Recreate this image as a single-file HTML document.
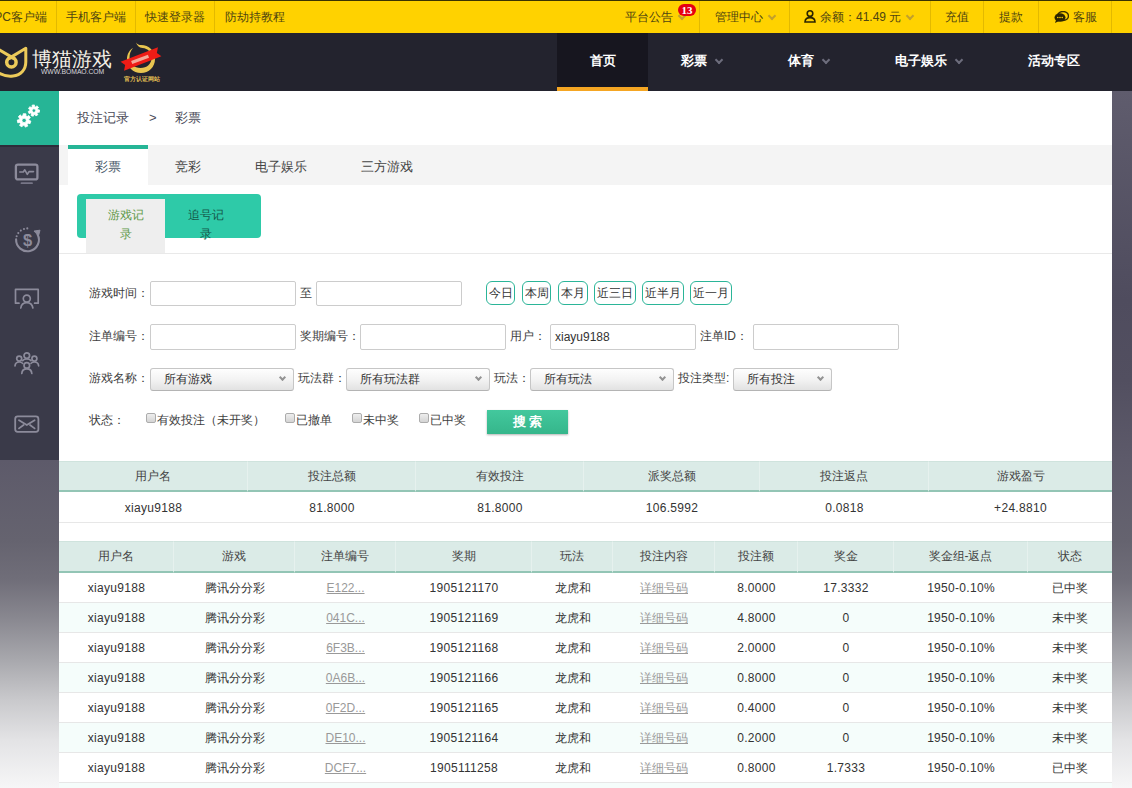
<!DOCTYPE html>
<html lang="zh">
<head>
<meta charset="utf-8">
<title>投注记录</title>
<style>
*{box-sizing:border-box;margin:0;padding:0}
html,body{width:1132px;height:788px;overflow:hidden}
body{font-family:"Liberation Sans",sans-serif;font-size:12px;color:#333;position:relative;
background:linear-gradient(to bottom,#5f5c6d 0px,#5f5c6d 91px,#4f4c5e 300px,#524f60 380px,#5d5a6a 460px,#65636f 540px,#706e79 580px,#8a8991 620px,#a8a8ad 660px,#c9c9cc 700px,#e3e3e5 740px,#f6f6f7 788px);}
a{color:inherit;text-decoration:none}
.abs{position:absolute}
/* top yellow bar */
#topbar{position:absolute;left:0;top:0;width:1132px;height:33px;background:#ffd200;border-top:1px solid #3a3300;font-size:12px;color:#4f4510}
#topbar .it{position:absolute;top:0;height:32px;line-height:32px;text-align:center;border-right:1px solid #e3b900;white-space:nowrap}
#topbar .chev{display:inline-block;width:6px;height:6px;border-right:2px solid #c2a02c;border-bottom:2px solid #c2a02c;transform:rotate(45deg);margin-left:6px;position:relative;top:-2px}
/* nav */
#nav{position:absolute;left:0;top:33px;width:1132px;height:58px;background:#23232e}
#nav .n{position:absolute;top:0;height:58px;line-height:55px;color:#fff;font-weight:bold;font-size:13px;white-space:nowrap}
#nav .chev{display:inline-block;width:6px;height:6px;border-right:2px solid #6d6d7c;border-bottom:2px solid #6d6d7c;transform:rotate(45deg);margin-left:9px;position:relative;top:-2px}
#nav .act{left:557px;width:91px;background:#17161f;text-align:center;border-bottom:4px solid #f5a623}
/* sidebar */
#side{position:absolute;left:0;top:91px;width:59px;height:369px;background:#3a3a49}
#side .on{position:absolute;left:0;top:0;width:59px;height:54px;background:#26b596}
/* main */
#main{position:absolute;left:59px;top:91px;width:1053px;height:697px;background:#fff}
#crumb{position:absolute;left:18px;top:18px;font-size:13px;color:#4b4b59;line-height:18px;white-space:pre}
#tabs{position:absolute;left:0;top:54px;width:1053px;height:40px;background:#f4f4f4}
#tabs .t{position:absolute;top:0;height:40px;line-height:44px;font-size:13px;color:#444;text-align:center}
#tabs .t.on{background:#fff;border-top:4px solid #26b596;line-height:36px;color:#4b5b6b}
#sub{position:absolute;left:18px;top:103px;width:184px;height:44px;background:#2ecaa8;border-radius:4px}
#sub .s{position:absolute;top:5px;width:79px;height:55px;padding:7px 0 0 0;white-space:nowrap;line-height:19px;text-align:center;font-size:12px;color:#15584a}
#sub .s.on{background:#eee;color:#5f9a49}
#subline{position:absolute;left:0;top:162px;width:1053px;height:1px;background:#e9e9e9}
.lb{position:absolute;font-size:12px;color:#404040;white-space:nowrap;line-height:16px}
.inp{position:absolute;height:25px;border:1px solid #ccc;border-radius:2px;background:#fff;font-size:12px;line-height:23px;padding-left:4px;color:#333}
.sel{position:absolute;height:23px;border:1px solid #c6c6c6;border-bottom-color:#b4b4b4;border-radius:3px;background:linear-gradient(#fefefe,#f3f3f3 50%,#e2e2e2);font-size:12px;line-height:21px;padding-left:13px;color:#333;white-space:nowrap}
.sel i{position:absolute;right:8px;top:6px;width:5px;height:5px;border-right:2px solid #939393;border-bottom:2px solid #939393;transform:rotate(45deg)}
.qb{position:absolute;top:190px;height:24px;border:1px solid #2bb598;border-radius:6px;background:#fff;font-size:12px;line-height:22px;text-align:center;color:#333}
.cb{position:absolute;top:322px;width:10px;height:10px;border:1px solid #acacac;border-radius:2px;background:linear-gradient(#eee,#d4d4d4)}
#btn{position:absolute;left:428px;top:319px;width:81px;height:24px;background:linear-gradient(#43c89d,#35b68b);color:#fff;font-weight:bold;font-size:13px;line-height:24px;text-align:center;box-shadow:0 1px 2px rgba(0,0,0,.3);letter-spacing:0}
table{position:absolute;left:0;border-collapse:separate;border-spacing:0;table-layout:fixed;width:1053px;font-size:12px}
th{height:31px;background:#dbebe7;font-weight:normal;color:#444;border-right:1px solid #e6f1ee;border-bottom:2px solid #93c5b5;border-top:1px solid #cfe3dd;padding:0;text-align:center}
th:last-child{border-right:none}
td{height:30px;text-align:center;color:#333;border-bottom:1px solid #e7e7e7;padding:1px 0 0 0}
#t1 td{height:31px}
td.l{letter-spacing:.3px}
td.l a{letter-spacing:0}
#t2 th{height:32px}
tr.alt td{background:#f5fdfb}
td a{color:#999;text-decoration:underline}
</style>
</head>
<body>

<div id="topbar">
  <div class="it" style="left:0;width:57px"><span style="position:absolute;right:9px;top:0">PC客户端</span></div>
  <div class="it" style="left:57px;width:79px">手机客户端</div>
  <div class="it" style="left:136px;width:79px">快速登录器</div>
  <div class="it" style="left:215px;width:80px;border-right:none">防劫持教程</div>
  <div class="it" style="left:600px;width:100px;text-align:left;padding-left:25px">平台公告<span class="chev"></span></div>
  <div class="abs" style="left:678px;top:3px;width:18px;height:12px;border-radius:6px;background:#e60012;color:#fff;font-size:11px;line-height:12px;text-align:center;font-weight:bold;font-family:'Liberation Serif',serif">13</div>
  <div class="it" style="left:700px;width:90px;text-align:left;padding-left:15px">管理中心<span class="chev"></span></div>
  <div class="it" style="left:790px;width:141px;text-align:left;padding-left:14px"><svg width="12" height="13" viewBox="0 0 12 13" style="vertical-align:-2px;margin-right:4px"><circle cx="6" cy="3.6" r="2.8" fill="none" stroke="#2b2500" stroke-width="1.6"/><path d="M1 12 C1 8.5 3.5 7.6 6 7.6 C8.5 7.6 11 8.5 11 12 Z" fill="none" stroke="#2b2500" stroke-width="1.6"/></svg>余额：41.49 元<span class="chev"></span></div>
  <div class="it" style="left:931px;width:53px">充值</div>
  <div class="it" style="left:984px;width:55px">提款</div>
  <div class="it" style="left:1039px;width:73px;text-align:left;padding-left:15px"><svg width="15" height="12" viewBox="0 0 15 12" style="vertical-align:-2px;margin-right:4px"><ellipse cx="9" cy="5" rx="5.5" ry="4.5" fill="none" stroke="#3a3000" stroke-width="1.4"/><ellipse cx="6" cy="6.5" rx="5.5" ry="4.3" fill="#2b2500"/><path d="M2 9 L1 12 L5 10 Z" fill="#2b2500"/><circle cx="3.8" cy="6.5" r=".8" fill="#ffd200"/><circle cx="6" cy="6.5" r=".8" fill="#ffd200"/><circle cx="8.2" cy="6.5" r=".8" fill="#ffd200"/></svg>客服</div>
</div>

<div id="nav">
  <!-- logo -->
  <svg class="abs" style="left:0;top:10px" width="30" height="38" viewBox="0 0 30 38">
    <g fill="none" stroke="#ecca5a" stroke-width="3" stroke-linecap="round" stroke-linejoin="round">
      <path d="M-2 29.5 C3 32.6 8 33.6 13 33 C21 32 25.8 26.5 25.8 19 L25.8 5.2 L8.6 15.6"/>
      <path d="M-2 6 L14.2 15.6"/>
      <circle cx="11.4" cy="19.2" r="4.7" stroke-width="3.5"/>
    </g>
  </svg>
  <div class="abs" style="left:32px;top:14px;font-size:20px;line-height:24px;color:#f3f0e6;font-weight:300;letter-spacing:0;white-space:nowrap">博猫游戏</div>
  <div class="abs" style="left:41px;top:35px;font-size:6.8px;line-height:8px;color:#d8d8dc;white-space:nowrap;letter-spacing:-.05px">WWW.BOMAO.COM</div>
  <svg class="abs" style="left:117.3px;top:4px" width="48" height="48" viewBox="0 0 48 48">
    <path d="M24 8 C32 8 38 14 38 22 C38 30 32 36 24 36 C16 36 10 30 10 22 C10 17 12.5 13 16 11 C13.5 14 12.5 17 12.5 20.5 C12.5 27 17.5 31 23.5 31 C30 31 34.5 27 34.5 21 C34.5 15 31 11.5 25.5 11 C22 10.6 20 8.5 19 5.5 C20.5 7.5 22 8 24 8 Z" fill="#e8c550"/>
    <g transform="rotate(-21 24 22)"><path d="M4 17.2 L44 17.2 L41 22 L44 26.8 L4 26.8 L7 22 Z" fill="#ee1c16"/><rect x="14" y="20.4" width="18" height="3.2" fill="#f4a898"/></g>
  </svg>
  <div class="abs" style="left:124px;top:43px;font-size:6px;line-height:7px;color:#e2be52;font-weight:bold;white-space:nowrap">官方认证网站</div>

  <div class="n act">首页</div>
  <div class="n" style="left:681px">彩票<span class="chev"></span></div>
  <div class="n" style="left:788px">体育<span class="chev"></span></div>
  <div class="n" style="left:895px">电子娱乐<span class="chev"></span></div>
  <div class="n" style="left:1028px">活动专区</div>
</div>

<div id="side">
  <div class="on"></div><div class="abs" style="left:0;top:54px;width:59px;height:2px;background:#2d2d3a"></div>
  <!-- gears -->
  <svg class="abs" style="left:15px;top:12px" width="28" height="26" viewBox="0 0 28 26">
    <g fill="#fff" fill-rule="evenodd" stroke="#fff" stroke-width=".8" stroke-linejoin="round">
      <path d="M14.00 17.42 L15.87 18.04 L15.05 20.70 L13.15 20.15 L12.14 21.24 L12.82 23.09 L10.23 24.11 L9.48 22.29 L7.99 22.17 L6.97 23.86 L4.56 22.46 L5.52 20.74 L4.68 19.51 L2.72 19.77 L2.31 17.01 L4.25 16.68 L4.69 15.26 L3.28 13.89 L5.17 11.85 L6.64 13.16 L8.03 12.62 L8.21 10.66 L10.99 10.87 L10.88 12.83 L12.17 13.58 L13.82 12.50 L15.39 14.81 L13.78 15.95 Z M6.90 17.40 a2.20 2.20 0 1 0 4.40 0 a2.20 2.20 0 1 0 -4.40 0 Z"/>
      <path d="M22.92 6.80 L24.57 6.99 L24.33 9.32 L22.68 9.18 L22.03 10.25 L22.91 11.65 L20.94 12.92 L20.02 11.54 L18.78 11.70 L18.23 13.26 L16.01 12.52 L16.52 10.94 L15.62 10.06 L14.06 10.60 L13.26 8.41 L14.81 7.82 L14.93 6.58 L13.53 5.69 L14.75 3.69 L16.18 4.53 L17.23 3.86 L17.05 2.21 L19.37 1.92 L19.60 3.56 L20.78 3.96 L21.96 2.79 L23.63 4.42 L22.50 5.63 Z M17.10 7.60 a1.80 1.80 0 1 0 3.60 0 a1.80 1.80 0 1 0 -3.60 0 Z"/>
    </g>
  </svg>
  <!-- monitor -->
  <svg class="abs" style="left:13px;top:70px" width="28" height="26" viewBox="0 0 28 26">
    <g fill="none" stroke="#8c8b9b" stroke-width="2.3" stroke-linecap="round" stroke-linejoin="round">
      <rect x="2.9" y="3.6" width="21.5" height="14.8" rx="2"/>
      <path d="M6.8 11 L10.3 11 L11.8 8.8 L14.3 13.4 L16 10.6 L20.5 10.6" stroke-width="1.6"/>
      <path d="M8.5 22.2 L19 22.2" stroke-width="1.8" stroke="#777687"/>
    </g>
  </svg>
  <!-- dollar cycle -->
  <svg class="abs" style="left:13px;top:135px" width="30" height="30" viewBox="0 0 30 30">
    <g fill="none" stroke="#8c8b9b" stroke-width="2.1" stroke-linecap="round" stroke-linejoin="round">
      <circle cx="3.66" cy="10.28" r="1.05" fill="#8c8b9b" stroke="none"/><circle cx="5.28" cy="7.10" r="1.05" fill="#8c8b9b" stroke="none"/><circle cx="7.80" cy="4.58" r="1.05" fill="#8c8b9b" stroke="none"/><circle cx="10.98" cy="2.96" r="1.05" fill="#8c8b9b" stroke="none"/><circle cx="14.30" cy="2.40" r="1.05" fill="#8c8b9b" stroke="none"/>
      <path d="M3.11 13.40 A11.4 11.4 0 1 0 24.57 8.45"/>
      <path d="M21.4 5 L27 4.2 L25.6 9.4 Z" fill="#8c8b9b" stroke-width="1"/>
    </g>
    <text x="14.6" y="19.7" text-anchor="middle" font-family="Liberation Sans, sans-serif" font-weight="bold" font-size="16.5" fill="#8c8b9b">$</text>
  </svg>
  <!-- presenter -->
  <svg class="abs" style="left:12px;top:195px" width="30" height="24" viewBox="0 0 30 24">
    <g fill="none" stroke="#8c8b9b" stroke-width="1.7" stroke-linecap="round" stroke-linejoin="round">
      <path d="M7 17.2 L3.5 17.2 L3.5 3.4 L26.2 3.4 L26.2 17.2 L22.6 17.2"/>
      <circle cx="14.8" cy="12.6" r="3.5"/>
      <path d="M8.8 22 C9.3 18 12 16.6 14.8 16.6 C17.6 16.6 20.3 18 20.9 22"/>
    </g>
  </svg>
  <!-- group -->
  <svg class="abs" style="left:12px;top:260px" width="30" height="24" viewBox="0 0 30 24">
    <g fill="none" stroke="#8c8b9b" stroke-width="1.7" stroke-linecap="round" stroke-linejoin="round">
      <circle cx="14.8" cy="4.6" r="2.8"/>
      <circle cx="7.2" cy="7.6" r="2.5"/>
      <circle cx="22.4" cy="7.6" r="2.5"/>
      <circle cx="14.8" cy="14.4" r="2.8"/>
      <path d="M3 14.8 C3.3 12 5.2 11 7.2 11 C8.8 11 10 11.5 10.6 12.4"/>
      <path d="M26.6 14.8 C26.4 12 24.4 11 22.4 11 C20.8 11 19.6 11.5 19 12.4"/>
      <path d="M10.6 9.6 C11.6 8.4 13.2 8 14.8 8 C16.4 8 18 8.4 19 9.6"/>
      <path d="M9.8 22.5 C10 19 12.4 17.9 14.8 17.9 C17.2 17.9 19.6 19 19.8 22.5"/>
    </g>
  </svg>
  <!-- mail -->
  <svg class="abs" style="left:12px;top:322px" width="30" height="22" viewBox="0 0 30 22">
    <g fill="none" stroke="#8c8b9b" stroke-width="1.8" stroke-linecap="round" stroke-linejoin="round">
      <rect x="3.2" y="3.4" width="23.2" height="15.4" rx="2.5"/>
      <path d="M7 7.2 L14.8 12 L22.6 7.2"/>
      <path d="M7 15.4 L11.6 12"/>
      <path d="M22.6 15.4 L18 12"/>
    </g>
  </svg>
</div>

<div id="main">
  <div id="crumb">投注记录<span style="margin:0 18px 0 20px">&gt;</span>彩票</div>
  <div id="tabs">
    <div class="t on" style="left:9px;width:80px">彩票</div>
    <div class="t" style="left:89px;width:80px">竞彩</div>
    <div class="t" style="left:169px;width:106px">电子娱乐</div>
    <div class="t" style="left:275px;width:106px">三方游戏</div>
  </div>
  <div id="sub">
    <div class="s on" style="left:9px">游戏记<br>录</div>
    <div class="s" style="left:89px">追号记<br>录</div>
  </div>
  <div id="subline"></div>

  <!-- row 1 -->
  <div class="lb" style="left:30px;top:194px">游戏时间：</div>
  <div class="inp" style="left:91px;top:190px;width:146px"></div>
  <div class="lb" style="left:241px;top:194px">至</div>
  <div class="inp" style="left:257px;top:190px;width:146px"></div>
  <div class="qb" style="left:427px;width:29px">今日</div>
  <div class="qb" style="left:463px;width:29px">本周</div>
  <div class="qb" style="left:499px;width:30px">本月</div>
  <div class="qb" style="left:535px;width:42px">近三日</div>
  <div class="qb" style="left:583px;width:42px">近半月</div>
  <div class="qb" style="left:631px;width:42px">近一月</div>

  <!-- row 2 -->
  <div class="lb" style="left:30px;top:237px">注单编号：</div>
  <div class="inp" style="left:91px;top:233px;width:146px;height:26px"></div>
  <div class="lb" style="left:241px;top:237px">奖期编号：</div>
  <div class="inp" style="left:301px;top:233px;width:146px;height:26px"></div>
  <div class="lb" style="left:451px;top:237px">用户：</div>
  <div class="inp" style="left:491px;top:233px;width:146px;height:26px;line-height:25px">xiayu9188</div>
  <div class="lb" style="left:641px;top:237px">注单ID：</div>
  <div class="inp" style="left:694px;top:233px;width:146px;height:26px"></div>

  <!-- row 3 -->
  <div class="lb" style="left:30px;top:279px">游戏名称：</div>
  <div class="sel" style="left:91px;top:277px;width:144px">所有游戏<i></i></div>
  <div class="lb" style="left:239px;top:279px">玩法群：</div>
  <div class="sel" style="left:287px;top:277px;width:144px">所有玩法群<i></i></div>
  <div class="lb" style="left:435px;top:279px">玩法：</div>
  <div class="sel" style="left:471px;top:277px;width:144px">所有玩法<i></i></div>
  <div class="lb" style="left:619px;top:279px">投注类型:</div>
  <div class="sel" style="left:674px;top:277px;width:99px">所有投注<i></i></div>

  <!-- row 4 -->
  <div class="lb" style="left:30px;top:321px">状态：</div>
  <div class="cb" style="left:87px"></div>
  <div class="lb" style="left:98px;top:321px">有效投注（未开奖）</div>
  <div class="cb" style="left:226px"></div>
  <div class="lb" style="left:237px;top:321px">已撤单</div>
  <div class="cb" style="left:293px"></div>
  <div class="lb" style="left:304px;top:321px">未中奖</div>
  <div class="cb" style="left:360px"></div>
  <div class="lb" style="left:371px;top:321px">已中奖</div>
  <div id="btn">搜 索</div>

  <!-- summary table -->
  <table id="t1" style="top:370px">
    <colgroup><col style="width:189px"><col style="width:168px"><col style="width:168px"><col style="width:176px"><col style="width:169px"><col style="width:183px"></colgroup>
    <tr><th>用户名</th><th>投注总额</th><th>有效投注</th><th>派奖总额</th><th>投注返点</th><th>游戏盈亏</th></tr>
    <tr><td class="l">xiayu9188</td><td class="l">81.8000</td><td class="l">81.8000</td><td class="l">106.5992</td><td class="l">0.0818</td><td class="l">+24.8810</td></tr>
  </table>

  <!-- detail table -->
  <table id="t2" style="top:450px">
    <colgroup><col style="width:115px"><col style="width:121px"><col style="width:101px"><col style="width:136px"><col style="width:81px"><col style="width:102px"><col style="width:83px"><col style="width:96px"><col style="width:134px"><col style="width:84px"></colgroup>
    <tr><th>用户名</th><th>游戏</th><th>注单编号</th><th>奖期</th><th>玩法</th><th>投注内容</th><th>投注额</th><th>奖金</th><th>奖金组-返点</th><th>状态</th></tr>
    <tr><td class="l">xiayu9188</td><td>腾讯分分彩</td><td class="l"><a>E122...</a></td><td class="l">1905121170</td><td>龙虎和</td><td><a>详细号码</a></td><td class="l">8.0000</td><td class="l">17.3332</td><td class="l">1950-0.10%</td><td>已中奖</td></tr>
    <tr class="alt"><td class="l">xiayu9188</td><td>腾讯分分彩</td><td class="l"><a>041C...</a></td><td class="l">1905121169</td><td>龙虎和</td><td><a>详细号码</a></td><td class="l">4.8000</td><td class="l">0</td><td class="l">1950-0.10%</td><td>未中奖</td></tr>
    <tr><td class="l">xiayu9188</td><td>腾讯分分彩</td><td class="l"><a>6F3B...</a></td><td class="l">1905121168</td><td>龙虎和</td><td><a>详细号码</a></td><td class="l">2.0000</td><td class="l">0</td><td class="l">1950-0.10%</td><td>未中奖</td></tr>
    <tr class="alt"><td class="l">xiayu9188</td><td>腾讯分分彩</td><td class="l"><a>0A6B...</a></td><td class="l">1905121166</td><td>龙虎和</td><td><a>详细号码</a></td><td class="l">0.8000</td><td class="l">0</td><td class="l">1950-0.10%</td><td>未中奖</td></tr>
    <tr><td class="l">xiayu9188</td><td>腾讯分分彩</td><td class="l"><a>0F2D...</a></td><td class="l">1905121165</td><td>龙虎和</td><td><a>详细号码</a></td><td class="l">0.4000</td><td class="l">0</td><td class="l">1950-0.10%</td><td>未中奖</td></tr>
    <tr class="alt"><td class="l">xiayu9188</td><td>腾讯分分彩</td><td class="l"><a>DE10...</a></td><td class="l">1905121164</td><td>龙虎和</td><td><a>详细号码</a></td><td class="l">0.2000</td><td class="l">0</td><td class="l">1950-0.10%</td><td>未中奖</td></tr>
    <tr><td class="l">xiayu9188</td><td>腾讯分分彩</td><td class="l"><a>DCF7...</a></td><td class="l">1905111258</td><td>龙虎和</td><td><a>详细号码</a></td><td class="l">0.8000</td><td class="l">1.7333</td><td class="l">1950-0.10%</td><td>已中奖</td></tr>
    <tr class="alt"><td>&nbsp;</td><td></td><td></td><td></td><td></td><td></td><td></td><td></td><td></td><td></td></tr>
  </table>
</div>

</body>
</html>
